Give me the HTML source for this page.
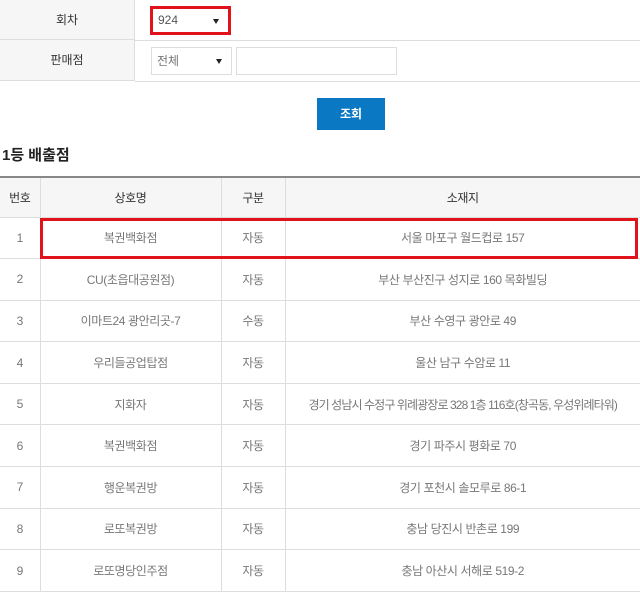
<!DOCTYPE html>
<html><head><meta charset="utf-8"><style>
*{margin:0;padding:0;box-sizing:border-box}
body{width:640px;height:593px;background:#fff;font-family:"Liberation Sans","Noto Sans CJK KR",sans-serif;font-size:12px;color:#666;position:relative;overflow:hidden}
.a{position:absolute}
.lbl{left:0;width:135px;background:#f6f6f6;text-align:center;color:#333;border-right:1px solid #ddd}
.sel{border:1px solid #ddd;background:#fff;color:#666;padding-left:5px}
.tri{position:absolute;right:9px;top:50%;margin-top:-2px;border-left:3.5px solid transparent;border-right:3.5px solid transparent;border-top:5px solid #222}
table{position:absolute;left:0;top:176px;width:640px;border-collapse:collapse;border-top:2px solid #888;table-layout:fixed}
td,th{border:1px solid #ddd;text-align:center;font-weight:normal;height:41.6px;font-size:12px;letter-spacing:-0.4px;color:#777}
th{background:#f6f6f6;color:#333;height:40px}
tr td:first-child,tr th:first-child{border-left:none}
tr td:last-child,tr th:last-child{border-right:none}
</style></head><body>
<div class="a lbl" style="top:0;height:40px;line-height:40px;border-bottom:1px solid #ddd">회차</div>
<div class="a lbl" style="top:40px;height:41px;line-height:41px;border-bottom:1px solid #ddd">판매점</div>
<div class="a" style="left:135px;top:40px;width:505px;height:1px;background:#ddd"></div>
<div class="a" style="left:135px;top:81px;width:505px;height:1px;background:#ddd"></div>
<div class="a sel" style="left:150px;top:6px;width:81px;height:29px;line-height:23px;border:3px solid #e0131c;color:#555">924<span class="tri"></span></div>
<div class="a sel" style="left:151px;top:47px;width:81px;height:28px;line-height:26px;color:#777">전체<span class="tri"></span></div>
<div class="a sel" style="left:236px;top:47px;width:161px;height:28px"></div>
<div class="a" style="left:317px;top:98px;width:68px;height:32px;background:#0a78c2;color:#fff;text-align:center;line-height:32px;font-weight:bold">조회</div>
<div class="a" style="left:2px;top:144px;font-size:15px;font-weight:bold;color:#222">1등 배출점</div>
<table>
<colgroup><col style="width:40px"><col style="width:181px"><col style="width:64px"><col></colgroup>
<tr><th>번호</th><th>상호명</th><th>구분</th><th>소재지</th></tr>
<tr><td>1</td><td>복권백화점</td><td>자동</td><td>서울 마포구 월드컵로 157</td></tr>
<tr><td>2</td><td>CU(초읍대공원점)</td><td>자동</td><td>부산 부산진구 성지로 160 목화빌딩</td></tr>
<tr><td>3</td><td>이마트24 광안리곳-7</td><td>수동</td><td>부산 수영구 광안로 49</td></tr>
<tr><td>4</td><td>우리들공업탑점</td><td>자동</td><td>울산 남구 수암로 11</td></tr>
<tr><td>5</td><td>지화자</td><td>자동</td><td style="letter-spacing:-0.9px">경기 성남시 수정구 위례광장로 328 1층 116호(창곡동, 우성위례타워)</td></tr>
<tr><td>6</td><td>복권백화점</td><td>자동</td><td>경기 파주시 평화로 70</td></tr>
<tr><td>7</td><td>행운복권방</td><td>자동</td><td>경기 포천시 솔모루로 86-1</td></tr>
<tr><td>8</td><td>로또복권방</td><td>자동</td><td>충남 당진시 반촌로 199</td></tr>
<tr><td>9</td><td>로또명당인주점</td><td>자동</td><td>충남 아산시 서해로 519-2</td></tr>
</table>
<div class="a" style="left:40px;top:218px;width:598px;height:41px;border:3px solid #e0131c"></div>
</body></html>
